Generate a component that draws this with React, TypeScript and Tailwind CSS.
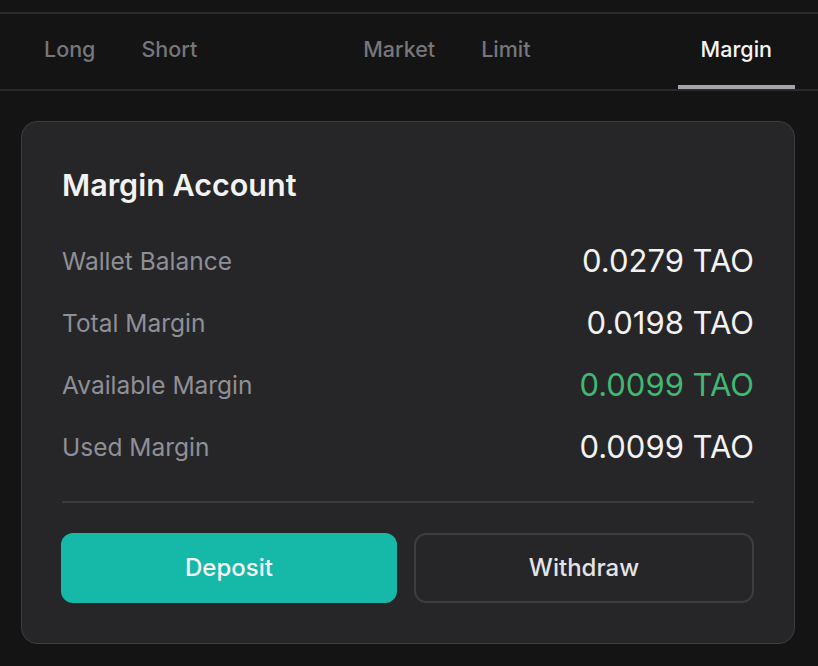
import React from "react";

const rows = [
  { label: "Wallet Balance", value: "0.0279 TAO", green: false },
  { label: "Total Margin", value: "0.0198 TAO", green: false },
  { label: "Available Margin", value: "0.0099 TAO", green: true },
  { label: "Used Margin", value: "0.0099 TAO", green: false },
];

function Tab({ label, active }: { label: string; active?: boolean }) {
  return (
    <div className="relative h-full px-[23px] pt-[21px]">
      <span
        className={
          "text-[21.5px] leading-[28px] font-medium " +
          (active ? "text-[#f4f4f4]" : "text-[#76767b]")
        }
      >
        {label}
      </span>
      {active && <div className="absolute bottom-0 left-0 right-0 h-[4px] bg-[#a4a4ac]" />}
    </div>
  );
}

export default function App() {
  return (
    <div
      className="w-full h-[666px] bg-[#141414] overflow-hidden"
      style={{ fontFamily: "Inter, 'Noto Sans', sans-serif" }}
    >
      <div className="h-[12px]" />
      <div className="border-t-2 border-b-2 border-[#2a2a2a]">
        <div className="flex h-[75px] pl-[21px] pr-[23px]">
          <div className="flex">
            <Tab label="Long" />
            <Tab label="Short" />
          </div>
          <div className="flex ml-[120px]">
            <Tab label="Market" />
            <Tab label="Limit" />
          </div>
          <div className="flex ml-auto">
            <Tab label="Margin" active />
          </div>
        </div>
      </div>
      <div className="ml-[21px] mr-[23px] mt-[30px] rounded-2xl border border-[#3c3c40] bg-[#262628] pl-[39px] pr-[40px] pt-[40px] pb-[40px]">
        <div className="pl-px text-[30.5px] leading-[46px] font-semibold text-[#f2f2f2]">Margin Account</div>
        <div className="mt-[22px] pl-px">
          {rows.map((r) => (
            <div key={r.label} className="flex h-[62px] items-center justify-between">
              <span className="text-[24.5px] text-[#8f8f96]">{r.label}</span>
              <span className={"text-[31px] " + (r.green ? "text-[#40b873]" : "text-[#f2f2f2]")}>
                {r.value}
              </span>
            </div>
          ))}
        </div>
        <div className="mt-[23px] ml-px h-[2px] bg-[#3a3a3f]" />
        <div className="mt-[30px] flex gap-[17px]">
          <button className="h-[70px] w-[336px] rounded-xl bg-[#16b8a8] text-[24px] font-medium text-[#f6f6f6]">
            Deposit
          </button>
          <button className="h-[70px] flex-1 rounded-xl border-2 border-[#3c3c41] text-[24px] font-medium text-[#e4e4e6]">
            Withdraw
          </button>
        </div>
      </div>
    </div>
  );
}
